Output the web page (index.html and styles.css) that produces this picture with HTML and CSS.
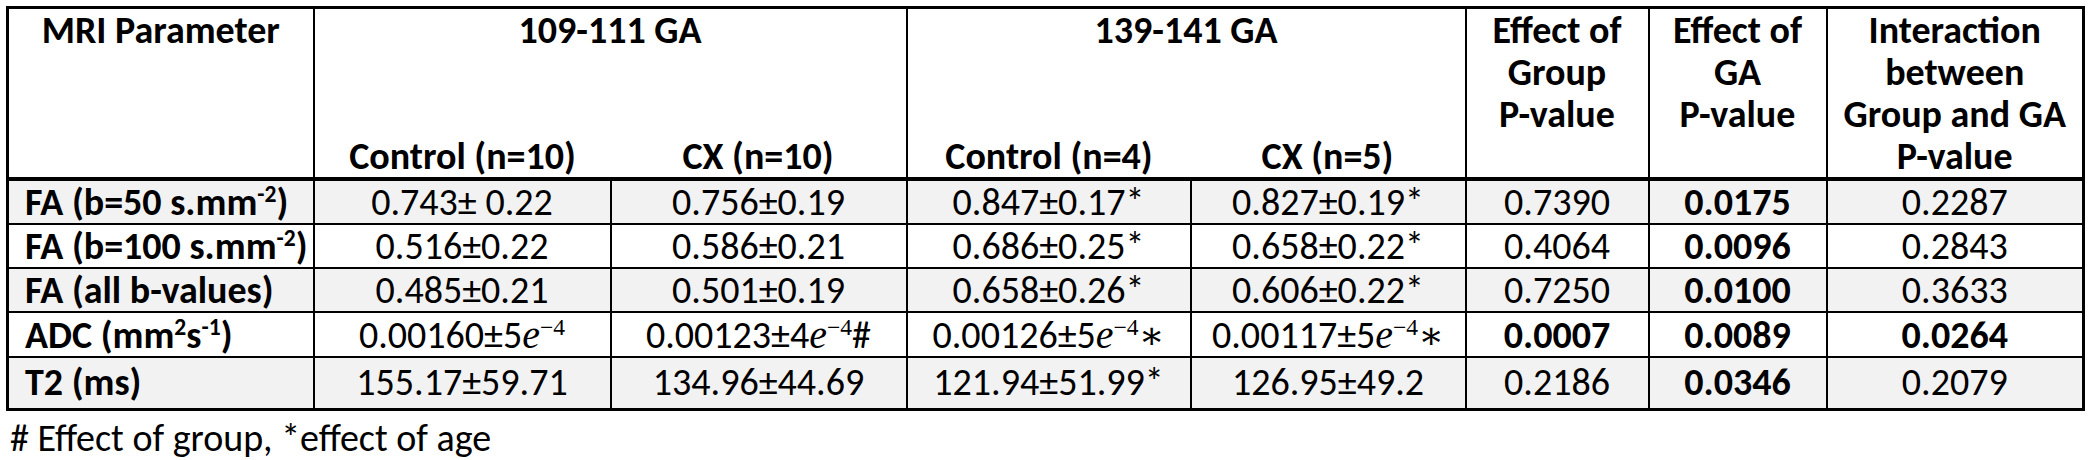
FILE: index.html
```html
<!DOCTYPE html>
<html lang="en">
<head>
    <meta charset="UTF-8">
    <title>MRI Parameters</title>
    <link rel="stylesheet" href="styles.css">
</head>
<body>
    <div class="sheet">
        <table class="results">
            <colgroup>
                <col class="w-param">
                <col class="w-a1">
                <col class="w-a2">
                <col class="w-b1">
                <col class="w-b2">
                <col class="w-group">
                <col class="w-ga">
                <col class="w-inter">
            </colgroup>
            <thead>
                <tr class="top">
                    <th rowspan="2">MRI Parameter</th>
                    <th colspan="2" class="group">109-111 GA</th>
                    <th colspan="2" class="group">139-141 GA</th>
                    <th rowspan="2">Effect of<br>Group<br>P-value</th>
                    <th rowspan="2">Effect of<br>GA<br>P-value</th>
                    <th rowspan="2">Interaction<br>between<br>Group and GA<br>P-value</th>
                </tr>
                <tr class="sub">
                    <th class="left">Control (n=10)</th>
                    <th class="right">CX (n=10)</th>
                    <th class="left">Control (n=4)</th>
                    <th class="right">CX (n=5)</th>
                </tr>
            </thead>
            <tbody>
                <tr class="shade r1">
                    <td class="param">FA (b=50 s.mm<sup>-2</sup>)</td>
                    <td>0.743± 0.22</td>
                    <td>0.756±0.19</td>
                    <td>0.847±0.17*</td>
                    <td>0.827±0.19*</td>
                    <td>0.7390</td>
                    <td><b>0.0175</b></td>
                    <td>0.2287</td>
                </tr>
                <tr>
                    <td class="param">FA (b=100 s.mm<sup>-2</sup>)</td>
                    <td>0.516±0.22</td>
                    <td>0.586±0.21</td>
                    <td>0.686±0.25*</td>
                    <td>0.658±0.22*</td>
                    <td>0.4064</td>
                    <td><b>0.0096</b></td>
                    <td>0.2843</td>
                </tr>
                <tr class="shade">
                    <td class="param">FA (all b-values)</td>
                    <td>0.485±0.21</td>
                    <td>0.501±0.19</td>
                    <td>0.658±0.26*</td>
                    <td>0.606±0.22*</td>
                    <td>0.7250</td>
                    <td><b>0.0100</b></td>
                    <td>0.3633</td>
                </tr>
                <tr class="adc">
                    <td class="param">ADC (mm<sup>2</sup>s<sup>-1</sup>)</td>
                    <td>0.00160±5<span class="math"><i>e</i><sup>−4</sup></span></td>
                    <td>0.00123±4<span class="math"><i>e</i><sup>−4</sup></span>#</td>
                    <td>0.00126±5<span class="math"><i>e</i><sup>−4</sup>∗</span></td>
                    <td>0.00117±5<span class="math"><i>e</i><sup>−4</sup>∗</span></td>
                    <td><b>0.0007</b></td>
                    <td><b>0.0089</b></td>
                    <td><b>0.0264</b></td>
                </tr>
                <tr class="shade last">
                    <td class="param">T2 (ms)</td>
                    <td>155.17±59.71</td>
                    <td>134.96±44.69</td>
                    <td>121.94±51.99*</td>
                    <td>126.95±49.2</td>
                    <td>0.2186</td>
                    <td><b>0.0346</b></td>
                    <td>0.2079</td>
                </tr>
            </tbody>
        </table>
        <p class="note"># Effect of group, *effect of age</p>
    </div>
</body>
</html>
```

FILE: styles.css
```css
* {
    box-sizing: border-box;
}
body {
    margin: 0;
    background-color: #fff;
    color: #000;
    font-family: Carlito, Calibri, Lato, sans-serif;
}
.sheet {
    padding: 6px 0 0 6px;
}
.results {
    border-collapse: collapse;
    table-layout: fixed;
    width: 2078px;
    border: 3px solid #000;
    font-size: 38px;
    line-height: 42px;
}
.w-param { width: 306px; }
.w-a1 { width: 297px; }
.w-a2 { width: 296px; }
.w-b1 { width: 284px; }
.w-b2 { width: 275px; }
.w-group { width: 183px; }
.w-ga { width: 178px; }
.w-inter { width: 257px; }

.results th,
.results td {
    padding: 0;
    border: 2px solid #000;
    text-align: center;
    white-space: nowrap;
}
.results thead th {
    font-weight: bold;
    vertical-align: top;
}
.results thead {
    border-bottom: 4px solid #000;
}
.results tr.top {
    height: 124px;
}
.results th.group {
    border-bottom: none;
}
.results tr.sub th {
    border-top: none;
    vertical-align: bottom;
}
.results tr.sub th.left {
    border-right: none;
}
.results tr.sub th.right {
    border-left: none;
}
.results td {
    height: 43px;
    vertical-align: middle;
}
.results tr.r1 td {
    height: 41px;
}
.results tr.shade {
    background-color: #f2f2f2;
}
.results tr.adc td {
    height: 45px;
}
.results tr.last td {
    height: 52px;
    vertical-align: top;
    padding-top: 3px;
}
.results td.param {
    text-align: left;
    padding-left: 16px;
    font-weight: bold;
}
sup {
    font-size: 0.62em;
    line-height: 0;
    vertical-align: 0.55em;
}
.math {
    font-family: "Liberation Serif", "DejaVu Serif", serif;
}
.math i {
    font-size: 1.05em;
}
.note {
    margin: 6px 0 0 4px;
    font-size: 38px;
    line-height: 43px;
}
```
